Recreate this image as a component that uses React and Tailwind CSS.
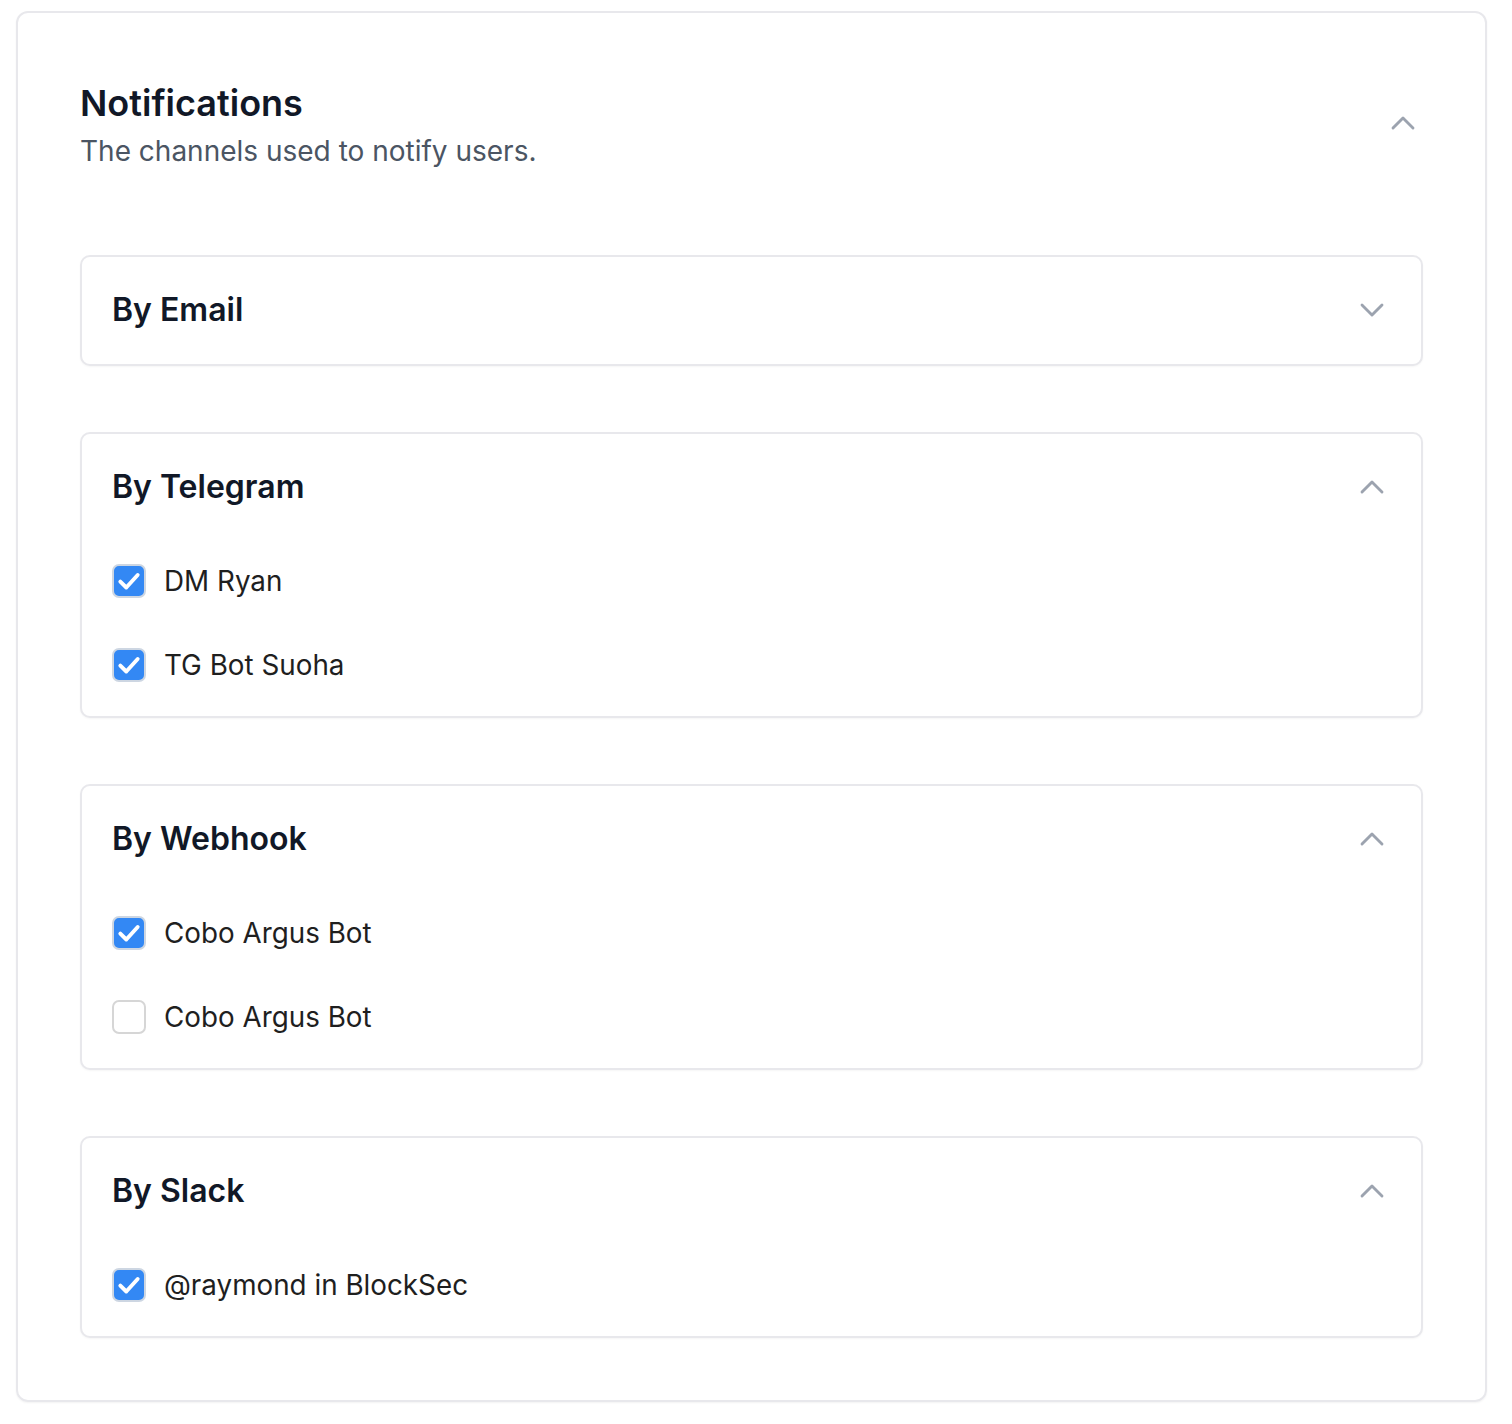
const CHANNELS = [
  { title: 'By Email', open: false, items: [] },
  {
    title: 'By Telegram',
    open: true,
    items: [
      { label: 'DM Ryan', checked: true },
      { label: 'TG Bot Suoha', checked: true },
    ],
  },
  {
    title: 'By Webhook',
    open: true,
    items: [
      { label: 'Cobo Argus Bot', checked: true },
      { label: 'Cobo Argus Bot', checked: false },
    ],
  },
  {
    title: 'By Slack',
    open: true,
    items: [{ label: '@raymond in BlockSec', checked: true }],
  },
]

function Chevron({ up }) {
  return (
    <svg width="40" height="40" viewBox="0 0 24 24" fill="none" stroke="#9ca3af" strokeWidth="1.7" strokeLinecap="round" strokeLinejoin="round" className="shrink-0">
      <path d={up ? 'm6 15 6-6 6 6' : 'm6 9 6 6 6-6'} />
    </svg>
  )
}

function Checkbox({ checked }) {
  if (!checked) {
    return <span className="w-[34px] h-[34px] shrink-0 rounded-[7px] border-2 border-[#d6d6d6] bg-white" />
  }
  return (
    <span className="w-[34px] h-[34px] shrink-0 rounded-[7px] border-2 border-[#cdd6e2] bg-[#3388f4] flex items-center justify-center">
      <svg width="26" height="26" viewBox="0 0 24 24" fill="none" stroke="white" strokeWidth="3.6" strokeLinecap="round" strokeLinejoin="round">
        <path d="M4 12.5 9.5 18 20 6.5" />
      </svg>
    </span>
  )
}

function ChannelCard({ title, open, items }) {
  return (
    <div className="border-2 border-[#e8e8ec] rounded-[10px] bg-white shadow-[0_1px_2px_rgba(0,0,0,0.04)] pl-[30px] pr-[29px] pt-[30px] pb-[31px]">
      <div className="flex items-center justify-between h-[46px]">
        <h3 className="text-[32px] leading-[46px] font-semibold text-[#111827]">{title}</h3>
        <Chevron up={open} />
      </div>
      {open && items.length > 0 && (
        <div className="mt-[51px] flex flex-col gap-[44px]">
          {items.map((item, i) => (
            <label key={i} className="flex items-center gap-[18px] h-[40px]">
              <Checkbox checked={item.checked} />
              <span className="text-[27.8px] leading-[40px] text-[#1f1f1f]">{item.label}</span>
            </label>
          ))}
        </div>
      )}
    </div>
  )
}

export default function App() {
  return (
    <div className="min-h-[1424px] bg-white pt-[11px] pl-[16px]" style={{ fontFamily: 'Inter, "Noto Sans", sans-serif' }}>
      <div className="w-[1471px] border-2 border-[#e8e8ec] rounded-[12px] shadow-[0_1px_2px_rgba(0,0,0,0.05)] px-[62px] pt-[62px] pb-[62px]">
        <div className="flex items-center justify-between">
          <div>
            <h2 className="text-[36px] leading-[56px] font-semibold text-[#111827]">Notifications</h2>
            <p className="text-[28px] leading-[40px] text-[#4b5563]">The channels used to notify users.</p>
          </div>
          <Chevron up />
        </div>
        <div className="mt-[84px] flex flex-col gap-[66px]">
          {CHANNELS.map(c => <ChannelCard key={c.title} {...c} />)}
        </div>
      </div>
    </div>
  )
}
